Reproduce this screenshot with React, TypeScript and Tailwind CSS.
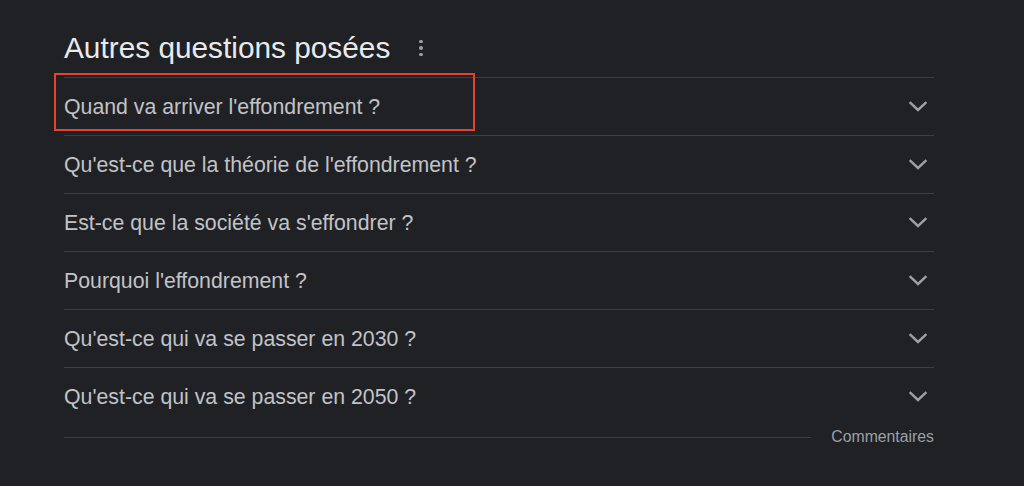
import React from "react";

const questions = [
  "Quand va arriver l'effondrement ?",
  "Qu'est-ce que la théorie de l'effondrement ?",
  "Est-ce que la société va s'effondrer ?",
  "Pourquoi l'effondrement ?",
  "Qu'est-ce qui va se passer en 2030 ?",
  "Qu'est-ce qui va se passer en 2050 ?",
];

function Chevron() {
  return (
    <svg width="20" height="12" viewBox="0 0 20 12" className="block">
      <polyline
        points="2.5,2 10,9 17.5,2"
        fill="none"
        stroke="#9aa0a6"
        strokeWidth="2.4"
        strokeLinecap="square"
      />
    </svg>
  );
}

export default function App() {
  return (
    <div
      className="w-[1024px] h-[486px] bg-[#202124] overflow-hidden"
      style={{ fontFamily: '"Liberation Sans", Arial, sans-serif' }}
    >
      <div className="ml-[64px] w-[870px] pt-[31px]">
        <div className="flex items-center h-[34px] mb-[12px]">
          <h2 className="text-[29.8px] leading-[34px] text-[#e8eaed] font-normal">
            Autres questions posées
          </h2>
          <div className="ml-[29px] flex flex-col gap-[3px]">
            <span className="block w-[3.5px] h-[3.5px] rounded-full bg-[#9aa0a6]" />
            <span className="block w-[3.5px] h-[3.5px] rounded-full bg-[#9aa0a6]" />
            <span className="block w-[3.5px] h-[3.5px] rounded-full bg-[#9aa0a6]" />
          </div>
        </div>
        <div className="relative">
          {questions.map((q, i) => (
            <div
              key={i}
              className="flex items-center justify-between h-[58px] border-t border-[#3c4043]"
            >
              <span className="text-[21.3px] leading-[26px] text-[#c0c3c8]">{q}</span>
              <span className="mr-[6px]">
                <Chevron />
              </span>
            </div>
          ))}
          <div className="absolute left-[-10px] top-[-4px] w-[421px] h-[58px] border-2 border-[#e5432f] pointer-events-none" />
        </div>
        <div className="flex items-center mt-[2px] h-[20px]">
          <div className="flex-1 h-px bg-[#3c4043]" />
          <span className="ml-[20px] text-[15.8px] leading-[20px] text-[#9aa0a6]">
            Commentaires
          </span>
        </div>
      </div>
    </div>
  );
}
